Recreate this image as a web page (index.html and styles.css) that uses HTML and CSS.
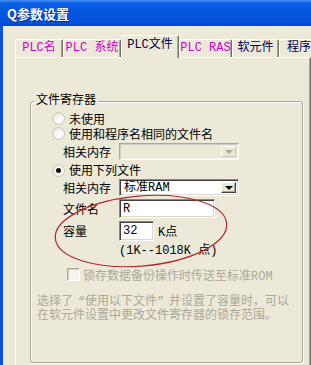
FILE: index.html
```html
<!DOCTYPE html>
<html lang="zh-CN">
<head>
  <meta charset="UTF-8" />
  <title>Q参数设置</title>
  <link rel="stylesheet" href="styles.css">
</head>
<body>
  <div class="window">
    <div class="titlebar"><span class="title">Q参数设置</span></div>
    <div class="frame">
      <div class="tabs">
        <div class="tab tab-name">PLC名</div>
        <div class="tab tab-sys">PLC 系统</div>
        <div class="tab tab-file active">PLC文件</div>
        <div class="tab tab-ras">PLC RAS</div>
        <div class="tab tab-dev dark">软元件</div>
        <div class="tab tab-prog dark">程序</div>
      </div>
      <div class="panel">
        <fieldset class="group">
          <legend>文件寄存器</legend>

          <div class="row radio-row r1"><span class="radio"></span>未使用</div>
          <div class="row radio-row r2"><span class="radio"></span>使用和程序名相同的文件名</div>
          <div class="row field-row mem1">
            <span class="field-label">相关内存</span>
            <span class="combo disabled"><span class="combo-text"></span><span class="combo-btn"><i class="arrow"></i></span></span>
          </div>
          <div class="row radio-row r3"><span class="radio checked"></span>使用下列文件</div>
          <div class="row field-row mem2">
            <span class="field-label">相关内存</span>
            <span class="combo"><span class="combo-text">标准RAM</span><span class="combo-btn"><i class="arrow"></i></span></span>
          </div>
          <div class="row field-row fname">
            <span class="field-label">文件名</span>
            <span class="textbox name-box">R</span>
          </div>
          <div class="row field-row cap">
            <span class="field-label">容量</span>
            <span class="textbox cap-box">32</span>
            <span class="unit">K点</span>
          </div>
          <div class="row range">(1K--1018K 点)</div>

          <div class="row check-row"><span class="checkbox"></span>锁存数据备份操作时传送至标准ROM</div>

          <div class="note">
            <div class="note-line">选择了<span class="q q-open">“</span>使用以下文件<span class="q q-close">”</span>并设置了容量时，可以</div>
            <div class="note-line">在软元件设置中更改文件寄存器的锁存范围。</div>
          </div>
        </fieldset>
      </div>
    </div>

    <svg class="mark" width="311" height="365" viewBox="0 0 311 365">
      <ellipse cx="141" cy="231" rx="86" ry="35" transform="rotate(-5 141 231)" fill="none" stroke="#b3262f" stroke-width="1.2" />
    </svg>
  </div>
</body>
</html>
```

FILE: styles.css
```css
* {
  box-sizing: border-box;
}

body {
  margin: 0;
  font-family: "Liberation Mono", "Noto Sans CJK SC", monospace;
  font-size: 12px;
  color: #000;
  background: #ece9d8;
}

.window {
  position: relative;
  width: 311px;
  height: 365px;
  overflow: hidden;
  background: #ece9d8;
}

/* title bar */
.titlebar {
  height: 26px;
  display: flex;
  align-items: center;
  padding-left: 7px;
  background: linear-gradient(#4a8ff5 0, #0b5fe6 3px, #0556e0 45%, #0453dc 85%, #0343c9 100%);
}

.title {
  color: #fff;
  font: bold 13px "Noto Sans CJK SC", sans-serif;
  text-shadow: 1px 1px #0a2a8a;
}

.frame {
  height: 339px;
  border-left: 3px solid #0c50dc;
  padding: 9px 0 0 12px;
}

/* tabs */
.tabs {
  display: flex;
  align-items: flex-end;
  height: 22px;
}

.tab {
  flex: none;
  height: 18px;
  border: 1px solid #fff;
  border-right-color: #716f64;
  border-bottom: none;
  border-radius: 2px 2px 0 0;
  box-shadow: inset -1px 0 #aca899;
  color: #cc00cc;
  text-align: center;
  line-height: 16px;
  white-space: nowrap;
}

.tab.dark {
  color: #00005a;
}

.tab.active {
  position: relative;
  z-index: 1;
  height: 23px;
  margin-bottom: -1px;
  background: #ece9d8;
  color: #00003c;
  line-height: 19px;
}

.tab-name { width: 48px; }
.tab-sys { width: 58px; }
.tab-file { width: 58px; }
.tab-ras { width: 53px; }
.tab-dev { width: 47px; }
.tab-prog { width: 40px; }

.panel {
  height: 320px;
  border: 1px solid #fff;
  border-right-color: #716f64;
  border-bottom: none;
  box-shadow: inset -1px 0 #aca899;
}

/* group box */
.group {
  margin: 37px 0 0 14px;
  width: 273px;
  height: 268px;
  padding: 4px 0 0;
  border: 1px solid #aca899;
  border-radius: 3px;
  box-shadow: inset 1px 1px #fff, 1px 1px #fff;
  min-width: 0;
}

.group legend {
  margin-left: 3px;
  padding: 0 2px;
  line-height: 12px;
}

.row {
  display: flex;
  align-items: center;
  white-space: nowrap;
}

.radio-row {
  padding-left: 21px;
}

.r1, .r2 { height: 15px; }
.r3 { height: 16px; margin-top: 2px; }

.radio {
  position: relative;
  width: 13px;
  height: 13px;
  margin-right: 4px;
  border: 1px solid #c9c7bb;
  border-radius: 50%;
  background: radial-gradient(circle at 65% 65%, #fff 0, #f6f5f0 45%, #d9d7cb 100%);
}

.radio.checked::after {
  content: "";
  position: absolute;
  left: 3px;
  top: 3px;
  width: 5px;
  height: 5px;
  border-radius: 50%;
  background: #111;
}

.field-row {
  padding-left: 32px;
}

.field-label {
  width: 56px;
}

.mem1 { height: 17px; margin-top: 2px; }
.mem2 { height: 17px; margin-top: 1px; }
.fname { height: 19px; margin-top: 3px; }
.cap { height: 20px; margin-top: 3px; }

/* combo boxes and edits */
.combo,
.textbox {
  display: flex;
  align-items: center;
  height: 100%;
  border: 1px solid;
  border-color: #8a887c #fff #fff #8a887c;
  box-shadow: inset 1px 1px #404040, inset -1px -1px #dcd9cc;
  background: #fff;
}

.combo {
  width: 120px;
  padding: 2px;
}

.combo.disabled {
  background: #ece9d8;
  border-color: #aca899 #fff #fff #aca899;
  box-shadow: inset 1px 1px #cfccbd, inset -1px -1px #f3f1e8;
}

.combo-text {
  flex: 1;
  padding-left: 2px;
  line-height: 12px;
}

.combo-btn {
  width: 15px;
  height: 100%;
  display: flex;
  align-items: center;
  justify-content: center;
  background: #ece9d8;
  border: 1px solid;
  border-color: #fff #404040 #404040 #fff;
  box-shadow: inset -1px -1px #aca899;
}

.combo.disabled .combo-btn {
  border-color: #fff #c8c5b8 #c8c5b8 #fff;
  box-shadow: none;
}

.arrow {
  width: 0;
  height: 0;
  border-left: 4px solid transparent;
  border-right: 4px solid transparent;
  border-top: 4px solid #000;
}

.combo.disabled .arrow {
  border-top-color: #aca899;
}

.textbox {
  padding-left: 3px;
  line-height: 12px;
}

.name-box { width: 96px; }
.cap-box { width: 35px; }

.unit {
  margin-left: 4px;
}

.range {
  height: 12px;
  margin-top: 2px;
  padding-left: 88px;
}

.check-row {
  height: 13px;
  margin-top: 13px;
  padding-left: 36px;
  color: #aca899;
}

.checkbox {
  width: 13px;
  height: 13px;
  margin-right: 3px;
  border: 1px solid;
  border-color: #aca899 #fff #fff #aca899;
  box-shadow: inset 1px 1px #d4d1c3;
  background: #f4f3ee;
}

.note {
  margin-top: 14px;
  padding-left: 6px;
  color: #aca899;
  white-space: nowrap;
}

.note-line {
  height: 14px;
  line-height: 14px;
}

/* full-width quote cells */
.q {
  display: inline-block;
  width: 12px;
}

.q-open { text-align: right; }
.q-close { text-align: left; }

/* hand-drawn marker circle */
.mark {
  position: absolute;
  left: 0;
  top: 0;
  pointer-events: none;
}
```
